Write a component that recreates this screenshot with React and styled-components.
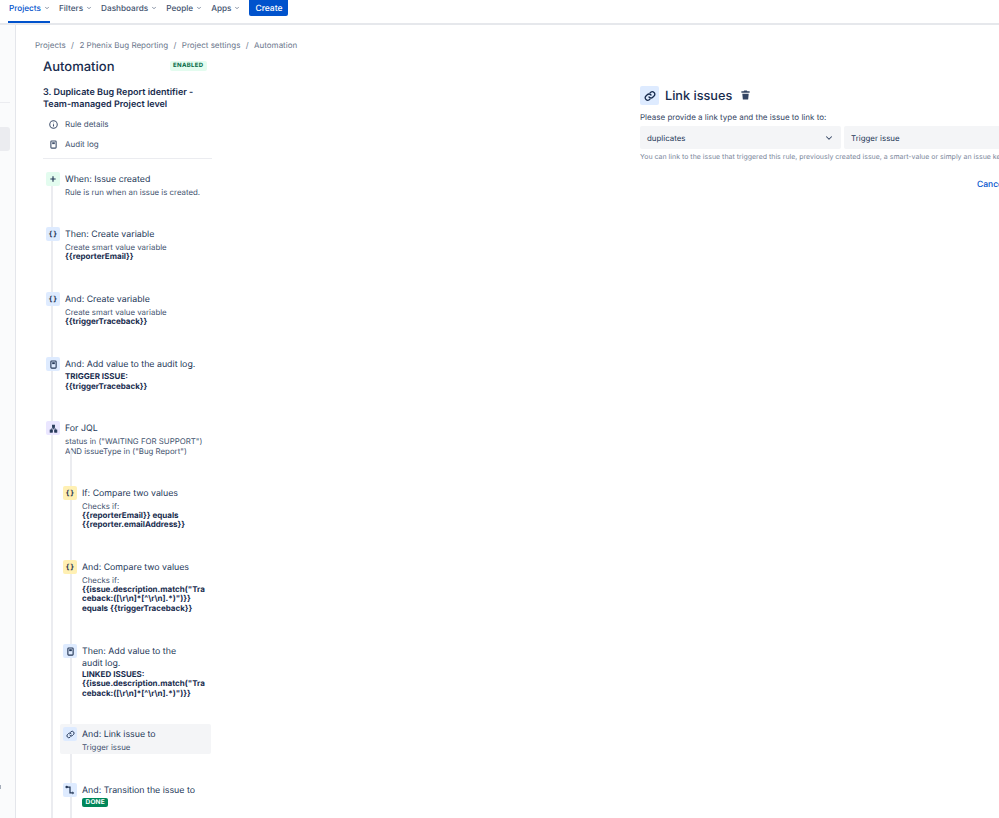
import React from "react";
import styled, { createGlobalStyle } from "styled-components";
import { ChevronDown } from "lucide-react";

const Global = createGlobalStyle`
  html, body { margin: 0; padding: 0; background: #fff; }
  body { font-family: Inter, "Liberation Sans", sans-serif; color: #172B4D; -webkit-font-smoothing: antialiased; text-rendering: geometricPrecision; }
`;
const Page = styled.div`width: 999px; height: 818px; overflow: hidden; display: flex; flex-direction: column;`;
const Nav = styled.nav`height: 23px; flex: none; display: flex; align-items: flex-start; padding-left: 9px; border-bottom: 2px solid #E6E8EC;`;
const NavItem = styled.div`
  height: 23px; box-sizing: border-box; display: flex; align-items: flex-start; gap: 3px; padding-top: 3px;
  margin-right: ${p => p.$gap}px; font-size: 8.2px; font-weight: 500; line-height: 11px;
  color: ${p => (p.$active ? "#0052CC" : "#42526E")};
  box-shadow: ${p => (p.$active ? "inset 0 -2px 0 #0052CC" : "none")};
  margin-left: ${p => (p.$active ? "-1px" : "0")};
  padding-left: ${p => (p.$active ? "1px" : "0")};
  svg { margin-top: 2px; }
`;
const CreateButton = styled.div`
  width: 39px; height: 16px; box-sizing: border-box; padding-top: 1px; background: #0052CC; color: #fff; border-radius: 0 0 2px 2px;
  font-size: 8.5px; font-weight: 500; display: flex; align-items: center; justify-content: center;
`;
const Body = styled.div`flex: 1; display: flex; min-height: 0;`;
const Sidebar = styled.aside`
  width: 15px; flex: none; background: #FAFBFC; border-right: 1px solid #E4E6EB; padding-top: 77px; display: flex; flex-direction: column; box-sizing: content-box;
`;
const SideRule = styled.div`height: 1px; background: #EBECF0; width: 10px;`;
const SideSelected = styled.div`height: 24px; width: 10px; margin-top: 24px; background: #EBECF0; border-radius: 0 3px 3px 0;`;
const SideDot = styled.div`width: 1px; height: 4px; margin-top: 634px; background: #A5ADBA;`;
const Content = styled.main`flex: 1; min-width: 0; padding: 15px 0 0 19px;`;
const Crumbs = styled.div`display: flex; gap: 5.4px; font-size: 8px; line-height: 10px; color: #6B778C; height: 10px;`;
const Columns = styled.div`display: flex; margin-top: 6px;`;
const Left = styled.section`width: 169px; margin-left: 8px; flex: none;`;
const TitleRow = styled.div`display: flex; align-items: flex-start; height: 31px;`;
const Title = styled.h1`margin: 0; font-size: 13px; font-weight: 500; line-height: 17px; width: 127px; margin-top: 3px;`;
const Lozenge = styled.span`
  height: 10px; padding: 0 3px; background: #E3FCEF; color: #006644; border-radius: 2px;
  font-size: 6px; font-weight: 700; line-height: 10px; letter-spacing: 0.35px; margin-top: 5px;
`;
const RuleName = styled.h2`margin: 0; font-size: 9px; font-weight: 600; line-height: 12px; white-space: nowrap;`;
const SideLink = styled.div`
  display: flex; align-items: center; gap: 7px; padding-left: 6px; height: 12px; margin-top: ${p => p.$top}px;
  font-size: 8px; color: #42526E;
`;
const Rule = styled.div`height: 1px; background: #EBECF0; margin-top: 8px;`;
const Timeline = styled.div`
  position: relative; margin-top: 13px;
  &::before { content: ""; position: absolute; left: 8px; top: 6px; bottom: -200px; width: 2px; background: #EBECF0; }
`;
const Step = styled.div`
  position: relative; display: grid; grid-template-columns: 14px 1fr; column-gap: 5px; height: ${p => p.$h}px;
  margin-left: ${p => (p.$nested ? "20px" : "3px")};
`;
const IconBox = styled.div`
  width: 14px; height: 14px; border-radius: 2px; display: flex; align-items: center; justify-content: center;
  background: ${p => p.$bg}; color: #253858; z-index: 1;
`;
const Brace = styled.span`font-family: "DejaVu Sans Mono", monospace; font-size: 7px; font-weight: 700; letter-spacing: 0.4px; line-height: 14px; color: #172B4D;`;
const StepBody = styled.div`min-width: 0; padding-top: 1.5px;`;
const StepTitle = styled.div`font-size: 8.8px; line-height: 12px; color: #253858;`;
const StepText = styled.div`font-size: 7.85px; line-height: 10px; color: #42526E; margin-top: 1px; overflow-wrap: anywhere;`;
const Strong = styled.div`font-size: 8px; line-height: 9.5px; font-weight: 700; color: #172B4D; overflow-wrap: anywhere; margin-top: ${p => p.$top || 0}px;`;
const Nested = styled.div`
  position: relative;
  &::before { content: ""; position: absolute; left: 27px; top: -36px; bottom: -200px; width: 2px; background: #EBECF0; }
`;
const Highlight = styled(Step)`
  &::before { content: ""; position: absolute; left: -3px; right: 1px; top: -3px; height: 30px; background: #F4F5F7; border-radius: 2px; }
  & > * { position: relative; }
`;
const Done = styled.span`
  display: inline-block; height: 9px; padding: 0 3.5px; margin-top: 1.5px; background: #00875A; color: #fff; border-radius: 2px;
  font-size: 6.5px; font-weight: 700; line-height: 9px; letter-spacing: 0.2px; vertical-align: top;
`;
const Right = styled.section`margin-left: 428px; width: 420px; flex: none; padding-top: 30px;`;
const PanelHead = styled.div`display: flex; align-items: center; height: 19px;`;
const PanelIcon = styled.div`width: 19px; height: 19px; border-radius: 2px; background: #DEEBFF; display: flex; align-items: center; justify-content: center; color: #172B4D;`;
const PanelTitle = styled.h2`margin: 1px 0 0 6px; font-size: 12.7px; font-weight: 500; line-height: 19px;`;
const Trash = styled.span`display: flex; margin-left: 8px; margin-top: -1px; color: #344563;`;
const Prompt = styled.div`font-size: 8px; line-height: 10px; color: #344563; margin-top: 7px;`;
const Fields = styled.div`display: flex; gap: 3px; margin-top: 4px;`;
const Field = styled.div`
  width: ${p => p.$w}px; height: 23px; box-sizing: border-box; background: #F4F5F7; border-radius: 2px; padding: 0 7px;
  display: flex; align-items: center; justify-content: space-between; font-size: 7.9px; color: #253858; flex: none;
`;
const Hint = styled.div`font-size: 7px; line-height: 9px; color: #7A869A; margin-top: 3px; white-space: nowrap;`;
const Actions = styled.div`margin-top: 10px; padding-left: 337px;`;
const Cancel = styled.span`font-size: 8.5px; font-weight: 500; color: #0052CC;`;

const LinkIcon = ({ s = 10 }) => (
  <svg width={s} height={s} viewBox="0 0 24 24" fill="none" stroke="currentColor" strokeWidth="2.6" strokeLinecap="round" strokeLinejoin="round">
    <path d="M10 14a5 5 0 0 0 7.5.5l3-3a5 5 0 0 0-7-7l-1.7 1.7" />
    <path d="M14 10a5 5 0 0 0-7.5-.5l-3 3a5 5 0 0 0 7 7l1.7-1.7" />
  </svg>
);
const LogIcon = () => (
  <svg width="9" height="9" viewBox="0 0 24 24" fill="none" stroke="currentColor" strokeWidth="3">
    <rect x="5" y="2.5" width="14" height="19" rx="2" />
    <rect x="8.5" y="6" width="7" height="5" fill="currentColor" stroke="none" />
  </svg>
);
const Plus = () => (
  <svg width="8" height="8" viewBox="0 0 24 24" stroke="currentColor" strokeWidth="3.5"><path d="M12 4v16M4 12h16" /></svg>
);
const Branch = () => (
  <svg width="9" height="9" viewBox="0 0 24 24" fill="currentColor" stroke="currentColor" strokeWidth="2">
    <rect x="9" y="3" width="6" height="6" /><rect x="3" y="16" width="6" height="6" /><rect x="15" y="16" width="6" height="6" />
    <path d="M12 9v4M6 16v-3h12v3" fill="none" />
  </svg>
);
const Transition = () => (
  <svg width="10" height="10" viewBox="0 0 24 24" fill="currentColor" stroke="currentColor" strokeWidth="3">
    <path d="M5 5h7v14h7" fill="none" /><circle cx="4" cy="5" r="1.5" /><path d="M18 15l4 4-4 4z" stroke="none" />
  </svg>
);
const Info = () => (
  <svg width="9" height="9" viewBox="0 0 24 24" fill="none" stroke="currentColor" strokeWidth="2.8">
    <circle cx="12" cy="12" r="10" /><path d="M12 11v6M12 7v1.5" />
  </svg>
);
const TrashIcon = () => (
  <svg width="11" height="12" viewBox="0 0 24 24" fill="currentColor">
    <path d="M9 2h6l1 2h5v3H3V4h5z" /><path d="M5 9h14l-1.2 13H6.2z" />
  </svg>
);
const Chev = () => <ChevronDown size={6} strokeWidth={2.5} color="#42526E" />;

const BLUE = "#DEEBFF", YEL = "#FFF0B3";
const Curly = () => <Brace>{"{}"}</Brace>;

export default function App() {
  return (
    <Page>
      <Global />
      <Nav>
        <NavItem $active $gap={9}>Projects <Chev /></NavItem>
        <NavItem $gap={9}>Filters <Chev /></NavItem>
        <NavItem $gap={9}>Dashboards <Chev /></NavItem>
        <NavItem $gap={9}>People <Chev /></NavItem>
        <NavItem $gap={9}>Apps <Chev /></NavItem>
        <CreateButton>Create</CreateButton>
      </Nav>
      <Body>
        <Sidebar>
          <SideRule />
          <SideSelected />
          <SideDot />
        </Sidebar>
        <Content>
          <Crumbs>
            <span>Projects</span><span>/</span><span>2 Phenix Bug Reporting</span><span>/</span>
            <span>Project settings</span><span>/</span><span>Automation</span>
          </Crumbs>
          <Columns>
            <Left>
              <TitleRow>
                <Title>Automation</Title>
                <Lozenge>ENABLED</Lozenge>
              </TitleRow>
              <RuleName>3. Duplicate Bug Report identifier -<br />Team-managed Project level</RuleName>
              <SideLink $top={7}><Info />Rule details</SideLink>
              <SideLink $top={8}><LogIcon />Audit log</SideLink>
              <Rule />
              <Timeline>
                <Step $h={55}>
                  <IconBox $bg="#E3FCEF"><Plus /></IconBox>
                  <StepBody><StepTitle>When: Issue created</StepTitle><StepText>Rule is run when an issue is created.</StepText></StepBody>
                </Step>
                <Step $h={65}>
                  <IconBox $bg={BLUE}><Curly /></IconBox>
                  <StepBody><StepTitle>Then: Create variable</StepTitle><StepText>Create smart value variable</StepText><Strong>{"{{reporterEmail}}"}</Strong></StepBody>
                </Step>
                <Step $h={65}>
                  <IconBox $bg={BLUE}><Curly /></IconBox>
                  <StepBody><StepTitle>And: Create variable</StepTitle><StepText>Create smart value variable</StepText><Strong>{"{{triggerTraceback}}"}</Strong></StepBody>
                </Step>
                <Step $h={64}>
                  <IconBox $bg={BLUE}><LogIcon /></IconBox>
                  <StepBody><StepTitle>And: Add value to the audit log.</StepTitle><Strong $top={1.5}>TRIGGER ISSUE:</Strong><Strong>{"{{triggerTraceback}}"}</Strong></StepBody>
                </Step>
                <Step $h={65}>
                  <IconBox $bg="#EAE6FF"><Branch /></IconBox>
                  <StepBody><StepTitle>For JQL</StepTitle><StepText>status in ("WAITING FOR SUPPORT")<br />AND issueType in ("Bug Report")</StepText></StepBody>
                </Step>
                <Nested>
                  <Step $nested $h={74}>
                    <IconBox $bg={YEL}><Curly /></IconBox>
                    <StepBody><StepTitle>If: Compare two values</StepTitle><StepText>Checks if:</StepText><Strong>{"{{reporterEmail}} equals"}<br />{"{{reporter.emailAddress}}"}</Strong></StepBody>
                  </Step>
                  <Step $nested $h={84}>
                    <IconBox $bg={YEL}><Curly /></IconBox>
                    <StepBody><StepTitle>And: Compare two values</StepTitle><StepText>Checks if:</StepText><Strong>{'{{issue.description.match("Tra'}<br />{'ceback:([\\r\\n]*[^\\r\\n].*)")}}'}<br />{"equals {{triggerTraceback}}"}</Strong></StepBody>
                  </Step>
                  <Step $nested $h={83}>
                    <IconBox $bg={BLUE}><LogIcon /></IconBox>
                    <StepBody><StepTitle>Then: Add value to the<br />audit log.</StepTitle><Strong>LINKED ISSUES:<br />{'{{issue.description.match("Tra'}<br />{'ceback:([\\r\\n]*[^\\r\\n].*)")}}'}</Strong></StepBody>
                  </Step>
                  <Highlight $nested $h={56}>
                    <IconBox $bg={BLUE}><LinkIcon s={9} /></IconBox>
                    <StepBody><StepTitle>And: Link issue to</StepTitle><StepText>Trigger issue</StepText></StepBody>
                  </Highlight>
                  <Step $nested $h={40}>
                    <IconBox $bg={BLUE}><Transition /></IconBox>
                    <StepBody><StepTitle>And: Transition the issue to</StepTitle><Done>DONE</Done></StepBody>
                  </Step>
                </Nested>
              </Timeline>
            </Left>
            <Right>
              <PanelHead>
                <PanelIcon><LinkIcon s={12} /></PanelIcon>
                <PanelTitle>Link issues</PanelTitle>
                <Trash><TrashIcon /></Trash>
              </PanelHead>
              <Prompt>Please provide a link type and the issue to link to:</Prompt>
              <Fields>
                <Field $w={201}>duplicates<ChevronDown size={10} strokeWidth={2.5} color="#344563" /></Field>
                <Field $w={200}>Trigger issue</Field>
              </Fields>
              <Hint>You can link to the issue that triggered this rule, previously created issue, a smart-value or simply an issue key.</Hint>
              <Actions><Cancel>Cancel</Cancel></Actions>
            </Right>
          </Columns>
        </Content>
      </Body>
    </Page>
  );
}
